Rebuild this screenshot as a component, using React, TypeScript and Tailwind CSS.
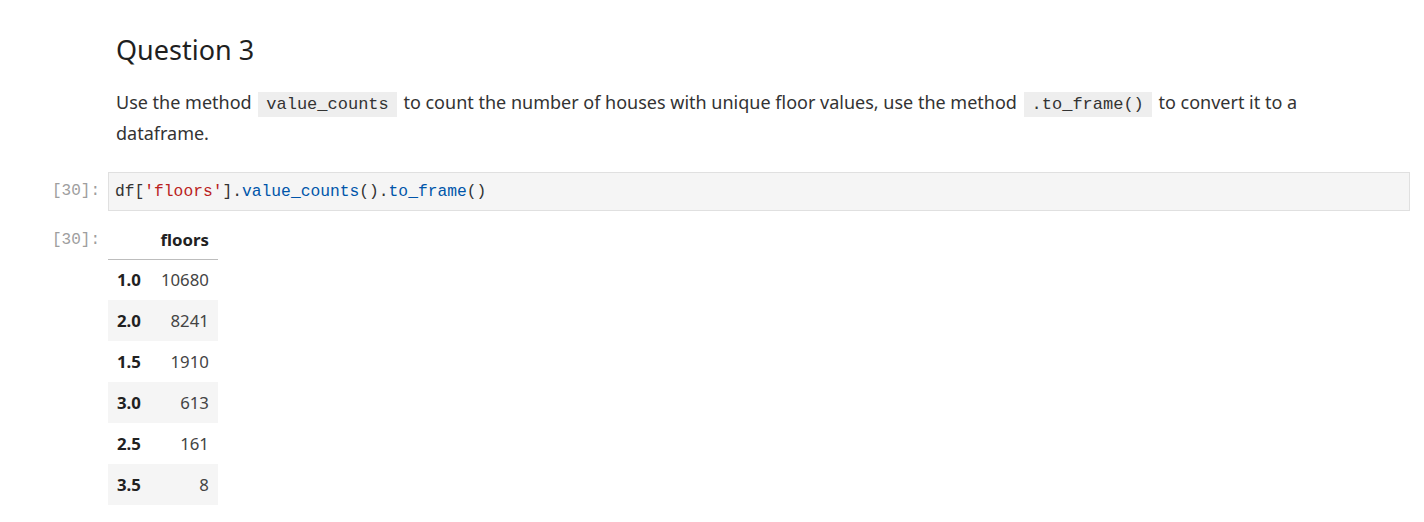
import React from 'react';

const rows = [
    { idx: '1.0', val: '10680' },
    { idx: '2.0', val: '8241' },
    { idx: '1.5', val: '1910' },
    { idx: '3.0', val: '613' },
    { idx: '2.5', val: '161' },
    { idx: '3.5', val: '8' },
];

const mono = "font-['Liberation_Mono',monospace]";

const InlineCode = ({ children }: { children: React.ReactNode }) => (
    <code className={`${mono} bg-[#eeeeee] text-[#333] text-[17px] px-[8px] py-[3px] mx-[2px]`}>{children}</code>
);

const App = () => {
    return (
        <div className="w-[1424px] h-[522px] bg-white font-['Noto_Sans',sans-serif] text-[#212121] overflow-hidden">
            {/* Markdown cell */}
            <div className="pl-[116px] pr-[14px] pt-[33px]">
                <h2 className="text-[27px] leading-[34px] font-normal text-[#1f1f1f]">Question 3</h2>
                <p className="mt-[21px] text-[18px] leading-[29px] text-[#333]">
                    <span className="whitespace-nowrap">
                        Use the method <InlineCode>value_counts</InlineCode> to count the number of houses with unique floor values, use the method <InlineCode>.to_frame()</InlineCode> to convert it to a
                    </span>
                    <br />
                    dataframe.
                </p>
            </div>

            {/* Code cell input */}
            <div className="flex mt-[24px]">
                <div className={`w-[108px] shrink-0 pr-[8px] text-right ${mono} text-[16px] text-[#9e9e9e] leading-[38px]`}>[30]:</div>
                <div className={`w-[1302px] h-[39px] bg-[#f5f5f5] border border-[#e0e0e0] px-[6px] ${mono} text-[16.3px] leading-[37px] text-[#333]`}>
                    df[<span className="text-[#ba2121]">'floors'</span>].<span className="text-[#0055aa]">value_counts</span>().<span className="text-[#0055aa]">to_frame</span>()
                </div>
            </div>

            {/* Output */}
            <div className="flex mt-[14px]">
                <div className={`w-[108px] shrink-0 pr-[8px] text-right ${mono} text-[16px] text-[#9e9e9e] leading-[30px]`}>[30]:</div>
                <table className="border-collapse text-[16.8px] text-[#333]">
                    <thead>
                        <tr className="border-b border-[#bdbdbd]">
                            <th className="h-[34px] px-[9px]"></th>
                            <th className="h-[34px] px-[9px] text-right font-bold text-[#212121] align-top pt-[2px]">floors</th>
                        </tr>
                    </thead>
                    <tbody>
                        {rows.map((r, i) => (
                            <tr key={r.idx} className={i % 2 === 1 ? 'bg-[#f5f5f5]' : ''}>
                                <th className="h-[41px] pl-[9px] pr-[9px] text-left font-bold text-[#212121]">{r.idx}</th>
                                <td className="h-[41px] pl-[9px] pr-[9px] text-right text-[#444] w-[68px]">{r.val}</td>
                            </tr>
                        ))}
                    </tbody>
                </table>
            </div>
        </div>
    );
};

export default App;
